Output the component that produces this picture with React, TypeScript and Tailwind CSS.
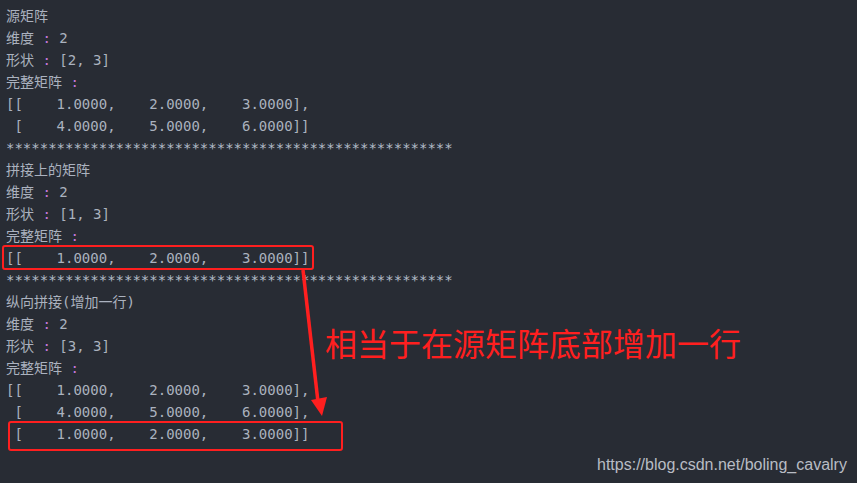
const mono = "font-['DejaVu_Sans_Mono','Noto_Sans_CJK_SC',monospace]"

const stars = "*".repeat(53)

const Label = ({ k, v }: { k: string; v?: string }) => (
  <div>
    {k} <span className="text-[#c678dd]">:</span>
    {v !== undefined ? ` ${v}` : ""}
  </div>
)

const Block = ({ title, dim, shape, rows }: { title: string; dim: string; shape: string; rows: string[] }) => (
  <>
    <div>{title}</div>
    <Label k="维度" v={dim} />
    <Label k="形状" v={shape} />
    <Label k="完整矩阵" />
    {rows.map((r, i) => (
      <div key={i}>{r}</div>
    ))}
  </>
)

export default function App() {
  return (
    <div className="relative w-[857px] h-[483px] overflow-hidden bg-[#282c34]">
      <div className={`${mono} flex flex-col text-[14px] leading-[22px] text-[#abb2bf] whitespace-pre pt-[5px] pl-[6px]`}>
        <Block
          title="源矩阵"
          dim="2"
          shape="[2, 3]"
          rows={["[[    1.0000,    2.0000,    3.0000],", " [    4.0000,    5.0000,    6.0000]]"]}
        />
        <div className="text-[#b3bcc8]">{stars}</div>
        <Block title="拼接上的矩阵" dim="2" shape="[1, 3]" rows={["[[    1.0000,    2.0000,    3.0000]]"]} />
        <div className="text-[#b3bcc8]">{stars}</div>
        <Block
          title="纵向拼接(增加一行)"
          dim="2"
          shape="[3, 3]"
          rows={[
            "[[    1.0000,    2.0000,    3.0000],",
            " [    4.0000,    5.0000,    6.0000],",
            " [    1.0000,    2.0000,    3.0000]]",
          ]}
        />
      </div>

      {/* red annotations drawn over the console output */}
      <div className="absolute left-[2px] top-[245px] w-[312px] h-[25px] border-2 border-[#ff1f1f] rounded-[3px]" />
      <div className="absolute left-[8px] top-[421px] w-[335px] h-[30px] border-2 border-[#ff1f1f] rounded-[3px]" />
      <svg className="absolute left-0 top-0" width="857" height="483" viewBox="0 0 857 483">
        <line x1="303" y1="270" x2="318" y2="402" stroke="#ff1f1f" strokeWidth="3.5" />
        <polygon points="311,400 327,397 322,416" fill="#ff1f1f" />
      </svg>
      <div className="absolute left-[325px] top-[322px] font-['Noto_Sans_CJK_SC',sans-serif] text-[32px] leading-[40px] text-[#ff1f1f]">
        相当于在源矩阵底部增加一行
      </div>
      <div className="absolute left-[597px] top-[454px] font-['Liberation_Sans',Arial,sans-serif] text-[16px] leading-[22px] text-[#b8bcc4]">
        https://blog.csdn.net/boling_cavalry
      </div>
    </div>
  )
}
